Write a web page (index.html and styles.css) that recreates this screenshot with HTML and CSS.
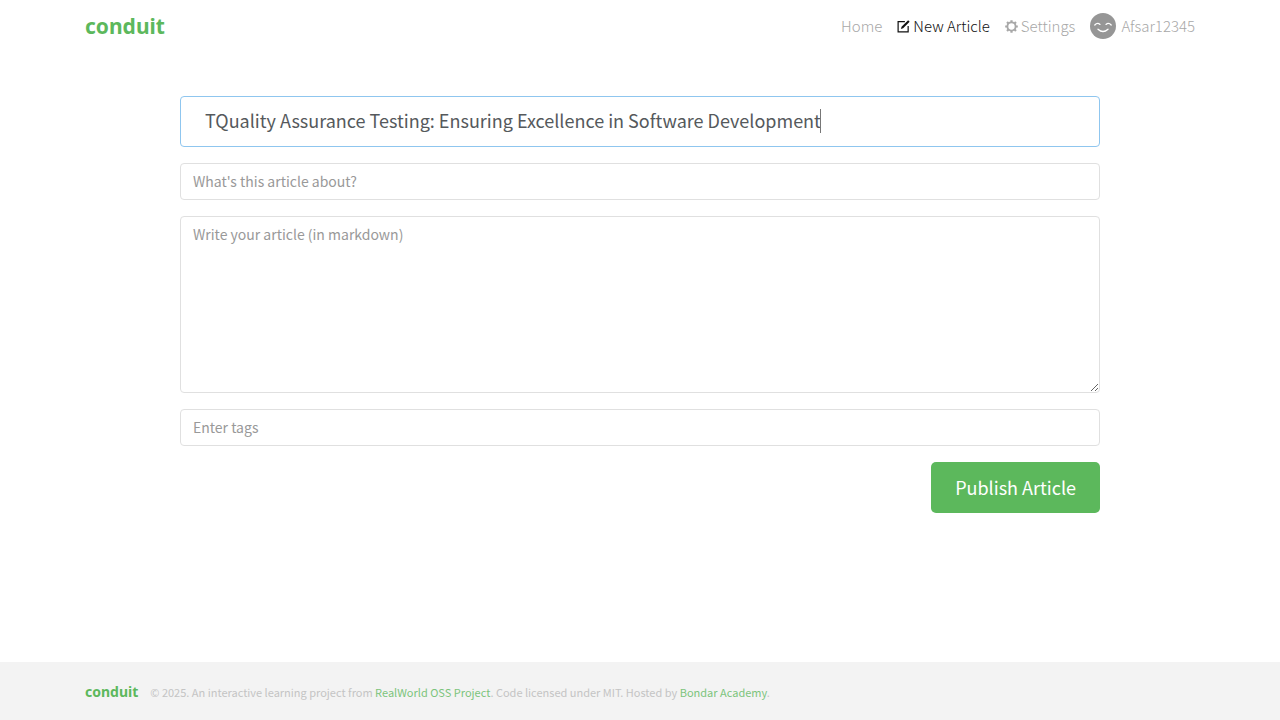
FILE: index.html
```html
<!DOCTYPE html>
<html lang="en">
<head>
<meta charset="utf-8">
<meta name="viewport" content="width=device-width, initial-scale=1">
<title>Conduit</title>
<link rel="stylesheet" href="styles.css">
</head>
<body>
<header class="navbar">
  <nav class="container navbar-inner" aria-label="Main">
    <a class="brand" href="#">conduit</a>
    <ul class="nav-list">
      <li><a class="nav-link" href="#">Home</a></li>
      <li><a class="nav-link active" href="#">
        <svg class="icon" viewBox="0 0 14 14" aria-hidden="true"><path d="M8.5 1.8H1.2v11H12V6.5" fill="none" stroke="currentColor" stroke-width="1.3"/><path d="M4.2 9.8l.7-2.5L12 .4l1.6 1.6-7 7z" fill="currentColor"/></svg>New Article</a></li>
      <li><a class="nav-link" href="#">
        <svg class="icon" viewBox="0 0 14 14" aria-hidden="true"><circle cx="7" cy="7" r="4.4" fill="none" stroke="currentColor" stroke-width="2"/><path d="M7 .2v2M7 11.8v2M.2 7h2M11.8 7h2M2.2 2.2l1.5 1.5M10.3 10.3l1.5 1.5M11.8 2.2l-1.5 1.5M3.7 10.3l-1.5 1.5" fill="none" stroke="currentColor" stroke-width="2.4"/></svg>Settings</a></li>
      <li><a class="nav-link profile" href="#">
        <svg class="avatar" viewBox="0 0 26 26" aria-hidden="true"><circle cx="13" cy="13" r="13" fill="#969696"/><path d="M4.8 12q2.6-2.8 5.2-.6M16 11.4q2.6-2.2 5.2.6M8 16.2q5 4.6 10 0" fill="none" stroke="#fff" stroke-width="1.3" stroke-linecap="round"/></svg>Afsar12345</a></li>
    </ul>
  </nav>
</header>
<main class="editor">
  <form class="editor-form">
    <div class="title-field">
      <input class="field field-large" type="text" aria-label="Article title" value="TQuality Assurance Testing: Ensuring Excellence in Software Development">
      <span class="caret" aria-hidden="true"></span>
    </div>
    <input class="field" type="text" aria-label="What's this article about?" placeholder="What's this article about?">
    <textarea class="field field-body" aria-label="Write your article" placeholder="Write your article (in markdown)"></textarea>
    <input class="field" type="text" aria-label="Enter tags" placeholder="Enter tags">
    <button class="publish" type="button">Publish Article</button>
  </form>
</main>
<footer class="footer">
  <div class="container footer-inner">
    <a class="footer-brand" href="#">conduit</a>
    <span class="attribution">© 2025. An interactive learning project from <a href="#">RealWorld OSS Project</a>. Code licensed under MIT. Hosted by <a href="#">Bondar Academy</a>.</span>
  </div>
</footer>
</body>
</html>
```
FILE: styles.css
```css
* { box-sizing: border-box; }
body {
  margin: 0;
  min-height: 100vh;
  display: flex;
  flex-direction: column;
  background: #fff;
  color: #373a3c;
  font-family: "Noto Sans CJK SC", "Noto Sans", sans-serif;
  font-size: 14px;
  line-height: 24px;
}
a { color: #5cb85c; text-decoration: none; }
.container {
  width: 100%;
  max-width: 1140px;
  margin: 0 auto;
  padding: 0 15px;
}
.navbar { padding: 6px 0 10px; }
.navbar-inner {
  display: flex;
  align-items: center;
  justify-content: space-between;
  height: 40px;
}
.brand {
  font-family: "Noto Sans", sans-serif;
  font-weight: 700;
  font-size: 21px;
}
.nav-list {
  display: flex;
  align-items: center;
  gap: 15px;
  margin: 0;
  padding: 0;
  list-style: none;
}
.nav-link {
  display: flex;
  align-items: center;
  gap: 3px;
  color: #a8a8a8;
  font-size: 15px;
  font-weight: 300;
}
.nav-link.active { color: #111; }
.profile { gap: 5px; }
.icon { width: 13px; height: 13px; }
.avatar { width: 26px; height: 26px; }
.editor {
  flex: 1;
  width: 100%;
  max-width: 950px;
  margin: 0 auto;
  padding: 40px 15px;
}
.editor-form {
  display: flex;
  flex-direction: column;
  gap: 16px;
}
.title-field { position: relative; display: flex; }
.field {
  display: block;
  width: 100%;
  height: 37px;
  padding: 4px 12px 6px;
  border: 1px solid #e0e0e0;
  border-radius: 4px;
  background: #fff;
  color: #55595c;
  font: inherit;
  outline: none;
}
.field::placeholder { color: #999; opacity: 1; }
.field-large {
  height: 51px;
  padding: 8px 24px 12px;
  border-color: #8fc6ef;
  font-size: 18px;
}
.caret {
  position: absolute;
  left: 640px;
  top: 13px;
  width: 1px;
  height: 24px;
  background: #777;
}
.field-body { height: 177px; padding: 5px 12px; resize: vertical; }
.publish {
  align-self: flex-end;
  height: 51px;
  padding: 0 24px 2px;
  border: 0;
  border-radius: 5px;
  background: #5cb85c;
  color: #fff;
  font: inherit;
  font-size: 18px;
}
.footer { padding: 18px 0 16px; background: #f3f3f3; }
.footer-inner { display: flex; align-items: center; gap: 12px; }
.footer-brand {
  font-family: "Noto Sans", sans-serif;
  font-weight: 700;
  font-size: 14px;
}
.attribution { color: #c4c4c4; font-size: 11px; }
.attribution a { color: #7cc47c; }
```
